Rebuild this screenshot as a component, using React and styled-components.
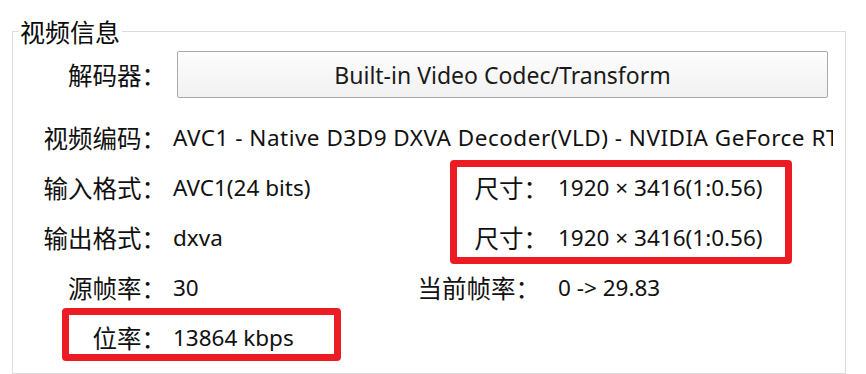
import * as React from 'react';
import styled, { createGlobalStyle } from 'styled-components';

const GlobalStyle = createGlobalStyle`
html, body {
    margin: 0;
    padding: 0;
    background: #ffffff;
}
body {
    font-family: "Noto Sans", "Noto Sans CJK SC", sans-serif;
    color: #111111;
}
`;

const rows = [
    { label: '输入格式：', value: 'AVC1(24 bits)', sideLabel: '尺寸：', sideValue: '1920 × 3416(1:0.56)' },
    { label: '输出格式：', value: 'dxva', sideLabel: '尺寸：', sideValue: '1920 × 3416(1:0.56)' },
    { label: '源帧率：', value: '30', sideLabel: '当前帧率：', sideValue: '0 -> 29.83', shift: 8 },
    { label: '位率：', value: '13864 kbps' },
];

class App extends React.Component {
    render() {
        return (
            <Page>
                <GlobalStyle />
                <Group>
                    <Legend>视频信息</Legend>
                    <InfoGrid>
                        <Label $row={1} $top>解码器：</Label>
                        <DecoderButton type="button">Built-in Video Codec/Transform</DecoderButton>

                        <Label $row={2}>视频编码：</Label>
                        <Value $row={2} $col="2 / 5" $wide>AVC1 - Native D3D9 DXVA Decoder(VLD) - NVIDIA GeForce RTX 3060 Laptop GPU</Value>

                        {rows.map((r, i) => (
                            <React.Fragment key={i}>
                                <Label $row={i + 3}>{r.label}</Label>
                                <Value $row={i + 3} $col={2}>{r.value}</Value>
                                {r.sideLabel && <Label $row={i + 3} $col={3} $shift={r.shift}>{r.sideLabel}</Label>}
                                {r.sideValue && <Value $row={i + 3} $col={4} $side>{r.sideValue}</Value>}
                            </React.Fragment>
                        ))}

                        <Mark $row="3 / 5" $col="3 / 5" $m="-2px 41px -2px 50px" />
                        <Mark $row="6 / 7" $col="1 / 3" $m="-4px 59px 1px 49px" />
                    </InfoGrid>
                </Group>
            </Page>
        );
    }
}

const Page = styled.div`
padding: 15px 20px 0 12px;
`;

const Group = styled.fieldset`
margin: 0;
padding: 4px 12px 11px 0;
border: 1px solid #dcdcdc;
min-width: 0;
`;

const Legend = styled.legend`
margin-left: 6px;
padding: 0 2px 0 1px;
font-size: 25px;
line-height: 32px;
font-family: "Noto Sans CJK SC", sans-serif;
color: #0a0a0a;
`;

const InfoGrid = styled.div`
display: grid;
grid-template-columns: 153px 234px 148px 285px;
grid-template-rows: 61px repeat(5, 50px);
align-items: center;
`;

const Label = styled.div`
grid-row: ${p => p.$row};
grid-column: ${p => p.$col || 1};
justify-self: end;
margin-right: ${p => p.$shift || 0}px;
${p => p.$top && 'align-self: start; line-height: 47px;'}
font-size: 24.5px;
font-family: "Noto Sans CJK SC", sans-serif;
white-space: nowrap;
`;

const Value = styled.div`
grid-row: ${p => p.$row};
grid-column: ${p => p.$col};
padding-left: ${p => (p.$side ? 10 : 7)}px;
font-size: 22.5px;
white-space: nowrap;
overflow: hidden;
${p => p.$wide && 'letter-spacing: 0.5px;'}
`;

const DecoderButton = styled.button`
grid-row: 1;
grid-column: 2 / 5;
align-self: start;
justify-self: start;
margin-left: 11px;
width: 651px;
height: 47px;
border: 1px solid #a9a9a9;
border-radius: 2px;
background: linear-gradient(#fdfdfd, #f1f1f1);
font-family: "Noto Sans", sans-serif;
font-size: 23px;
color: #1a1a1a;
padding: 0;
`;

const Mark = styled.div`
grid-row: ${p => p.$row};
grid-column: ${p => p.$col};
align-self: stretch;
margin: ${p => p.$m};
border: 7px solid #ed1c24;
border-radius: 4px;
pointer-events: none;
`;

export default App;
